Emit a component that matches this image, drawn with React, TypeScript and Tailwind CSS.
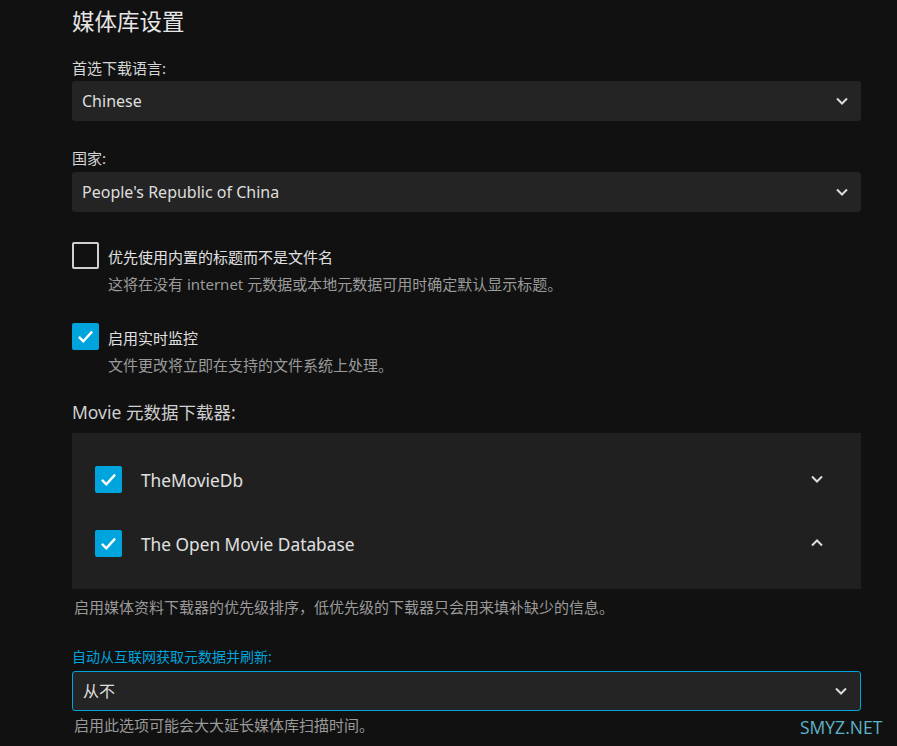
import React from 'react';

const font = { fontFamily: '"Noto Sans", "Noto Sans CJK SC", sans-serif' };

function Chevron({ up = false }: { up?: boolean }) {
  return (
    <svg width="14" height="14" viewBox="0 0 14 14" className="shrink-0">
      <polyline
        points={up ? '2,9.5 7,4.5 12,9.5' : '2,4.5 7,9.5 12,4.5'}
        fill="none"
        stroke="#dcdcdc"
        strokeWidth="2"
      />
    </svg>
  );
}

function Check({ checked }: { checked: boolean }) {
  if (!checked) {
    return <div className="w-[27px] h-[27px] shrink-0 rounded-[2px] border-2 border-[#d0d0d0]" />;
  }
  return (
    <div className="w-[27px] h-[27px] shrink-0 rounded-[2px] bg-[#00a4dc] flex items-center justify-center">
      <svg width="21" height="21" viewBox="0 0 24 24">
        <polyline points="4.5,12.5 9.5,17.5 19.5,6.5" fill="none" stroke="#fff" strokeWidth="2.8" />
      </svg>
    </div>
  );
}

function Select({ value, focused = false }: { value: string; focused?: boolean }) {
  return (
    <div
      className={`h-10 rounded-[3px] bg-[#242424] flex items-center justify-between pl-[10px] pr-[12px] text-[16px] text-[#dedede] ${
        focused ? 'border border-[#00a4dc] pl-[9px] pr-[11px]' : ''
      }`}
    >
      <span>{value}</span>
      <Chevron />
    </div>
  );
}

export default function App() {
  return (
    <div className="relative w-full h-[746px] overflow-hidden bg-[#111111]" style={font}>
      <div className="ml-[72px] w-[789px] pt-[7px]">
        <h2 className="text-[22.5px] leading-[30px] text-[#e6e6e6] font-normal">媒体库设置</h2>

        <div className="mt-[21px] mb-[3px] text-[15px] leading-[20px] text-[#d6d6d6]">首选下载语言:</div>
        <Select value="Chinese" />

        <div className="mt-[27px] mb-[4px] text-[15px] leading-[20px] text-[#d6d6d6]">国家:</div>
        <Select value="People's Republic of China" />

        <div className="mt-[30px] flex items-center gap-[9px]">
          <Check checked={false} />
          <span className="pt-[2px] text-[15px] leading-[20px] text-[#e0e0e0]">优先使用内置的标题而不是文件名</span>
        </div>
        <div className="ml-[36px] mt-[5px] text-[15px] leading-[20px] text-[#9a9a9a]">
          这将在没有 internet 元数据或本地元数据可用时确定默认显示标题。
        </div>

        <div className="mt-[29px] flex items-center gap-[9px]">
          <Check checked />
          <span className="pt-[2px] text-[15px] leading-[20px] text-[#e0e0e0]">启用实时监控</span>
        </div>
        <div className="ml-[36px] mt-[5px] text-[15px] leading-[20px] text-[#9a9a9a]">
          文件更改将立即在支持的文件系统上处理。
        </div>

        <div className="mt-[25px] text-[17.5px] leading-[24px] text-[#cfcfcf]">Movie 元数据下载器:</div>

        <div className="mt-[9px] bg-[#202020] pl-[23px] pr-[37px] pt-[32px] pb-[32px] flex flex-col gap-[36px]">
          <div className="flex items-center">
            <Check checked />
            <span className="ml-[19px] pt-[4px] flex-1 text-[17.3px] leading-[24px] text-[#e0e0e0]">TheMovieDb</span>
            <Chevron />
          </div>
          <div className="flex items-center">
            <Check checked />
            <span className="ml-[19px] pt-[4px] flex-1 text-[17.3px] leading-[24px] text-[#e0e0e0]">
              The Open Movie Database
            </span>
            <Chevron up />
          </div>
        </div>

        <div className="ml-[2px] mt-[8px] text-[15px] leading-[20px] text-[#9a9a9a]">
          启用媒体资料下载器的优先级排序，低优先级的下载器只会用来填补缺少的信息。
        </div>

        <div className="mt-[30px] mb-[4px] text-[14px] leading-[20px] text-[#00a4dc]">自动从互联网获取元数据并刷新:</div>
        <Select value="从不" focused />
        <div className="ml-[2px] mt-[4px] text-[15px] leading-[20px] text-[#9a9a9a]">
          启用此选项可能会大大延长媒体库扫描时间。
        </div>
      </div>

      <div
        className="absolute left-[800px] top-[716px] text-[17.5px] leading-[22px] text-[#5fb3c6]"
        style={{ fontFamily: '"Open Sans", "Liberation Sans", sans-serif' }}
      >
        SMYZ.NET
      </div>
    </div>
  );
}
